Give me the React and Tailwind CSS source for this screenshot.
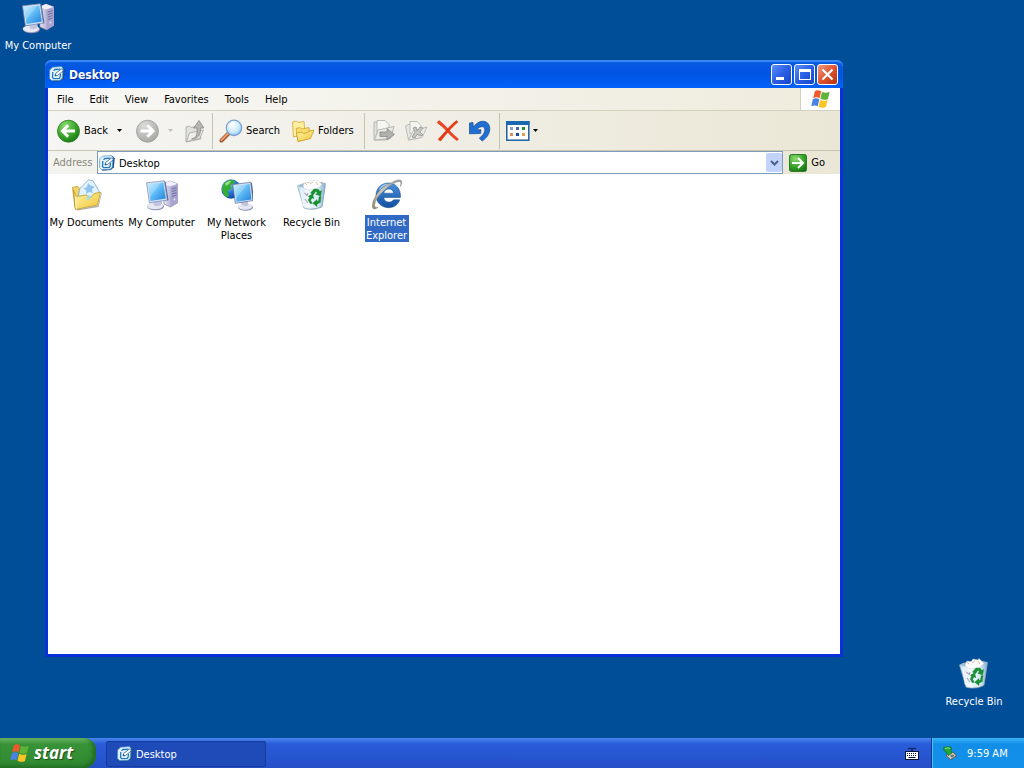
import React, { useState } from "react";

const menus = ["File", "Edit", "View", "Favorites", "Tools", "Help"];

// Gradients shared by all the icons
function IconDefs() {
  return (
    <svg className="absolute h-0 w-0" aria-hidden="true">
      <defs>
        <linearGradient id="screen" x1="0" y1="0" x2="1" y2="1">
          <stop offset="0" stopColor="#b9ecff" />
          <stop offset=".5" stopColor="#5cb8f5" />
          <stop offset="1" stopColor="#1f7fd8" />
        </linearGradient>
        <linearGradient id="tower" x1="0" y1="0" x2="1" y2="0">
          <stop offset="0" stopColor="#e9e8f6" />
          <stop offset="1" stopColor="#8c88ba" />
        </linearGradient>
        <linearGradient id="folder" x1="0" y1="0" x2="1" y2="1">
          <stop offset="0" stopColor="#fff6a4" />
          <stop offset="1" stopColor="#f0c53c" />
        </linearGradient>
        <linearGradient id="bin" x1="0" y1="0" x2="1" y2="0">
          <stop offset="0" stopColor="#c3ddea" />
          <stop offset=".35" stopColor="#f4fbff" />
          <stop offset=".75" stopColor="#d3e9f5" />
          <stop offset="1" stopColor="#86abcc" />
        </linearGradient>
        <radialGradient id="globe" cx=".35" cy=".3" r=".8">
          <stop offset="0" stopColor="#8fd4ff" />
          <stop offset=".5" stopColor="#2678d8" />
          <stop offset="1" stopColor="#123d90" />
        </radialGradient>
        <radialGradient id="green" cx=".35" cy=".25" r=".85">
          <stop offset="0" stopColor="#8fdc74" />
          <stop offset=".55" stopColor="#3aa52a" />
          <stop offset="1" stopColor="#167414" />
        </radialGradient>
        <radialGradient id="grey" cx=".35" cy=".25" r=".85">
          <stop offset="0" stopColor="#dcdcd8" />
          <stop offset="1" stopColor="#a3a3a0" />
        </radialGradient>
        <radialGradient id="lens" cx=".4" cy=".35" r=".7">
          <stop offset="0" stopColor="#ffffff" />
          <stop offset=".6" stopColor="#cdebfb" />
          <stop offset="1" stopColor="#85c2ef" />
        </radialGradient>
        <linearGradient id="ie" x1="0" y1="0" x2="0" y2="1">
          <stop offset="0" stopColor="#4a93de" />
          <stop offset="1" stopColor="#134f9f" />
        </linearGradient>
        <linearGradient id="swoosh" x1="1" y1="0" x2="0" y2="1">
          <stop offset="0" stopColor="#8d9096" />
          <stop offset=".5" stopColor="#cfcfca" />
          <stop offset="1" stopColor="#8f8466" />
        </linearGradient>
      </defs>
    </svg>
  );
}

function Monitor() {
  return (
    <g>
      <path d="M8 21l7-1 1 5-6 2z" fill="#a9a9cc" />
      <ellipse cx="9.500" cy="27.500" rx="8.500" ry="3.800" fill="#8f8fb5" />
      <ellipse cx="9" cy="26.700" rx="8.200" ry="3.500" fill="#e6e7f3" />
      <path d="M7 21.500l7-1 1.500 5c-2 1.600-5 2-7.500 1z" fill="#c3c5de" />
      <path d="M18 2l1.500.8 3 18.500-1.800.3z" fill="#4c5f96" />
      <path d="M.5 3.800L18.300 1.800 21.300 21 3.400 23.800z" fill="#d5e3f2" stroke="#7089b5" strokeWidth=".7" />
      <path d="M2 5.200l15.200-1.800 2.600 16.200L4.500 22z" fill="url(#screen)" />
      <path d="M2 5.200l13-1.500L4 18z" fill="#fff" opacity=".22" />
    </g>
  );
}

function ComputerIcon() {
  return (
    <svg width="32" height="32" viewBox="0 0 32 32" aria-hidden="true">
      <path d="M17 5l7-3 8 3v18.500L24.500 28 18 25z" fill="url(#tower)" stroke="#77749f" strokeWidth=".6" />
      <path d="M17 5l7-3 8 3-7.500 2.500z" fill="#f0f0fb" />
      <path d="M24.500 7.500L32 5v18.500L24.500 28z" fill="#a8a4cf" />
      <path d="M26 10l4.500-1.400M26 12.500l4.500-1.400M26 15l4.500-1.400M26 17.500l4.500-1.400" stroke="#6f6b9c" strokeWidth=".9" />
      <circle cx="28.500" cy="20.500" r=".9" fill="#e4e4ff" />
      <Monitor />
    </svg>
  );
}

function NetworkIcon() {
  return (
    <svg width="32" height="32" viewBox="0 0 32 32" aria-hidden="true">
      <circle cx="10" cy="10" r="9.700" fill="url(#globe)" />
      <path d="M3 4.500C6 1 11 .3 14 2l-1.500 3-3 1 1 3.500-4 2.500 1.500 4-2 2.500C1.500 15.500-.5 10 3 4.500z" fill="#37ad32" />
      <path d="M4 4.500C6 2.500 8 2 10 2L8 5 5 7z" fill="#9be184" />
      <g transform="translate(11.500 3)">
        <path d="M8 20l7-1 1 5-5 2z" fill="#a9a9cc" />
        <ellipse cx="13" cy="25.400" rx="7.500" ry="3.400" fill="#8f8fb5" />
        <ellipse cx="12.500" cy="24.600" rx="7.200" ry="3.100" fill="#e6e7f3" />
        <path d="M9 19l6-1 1 5c-2 1.500-4 1.500-6 .5z" fill="#c3c5de" />
        <path d="M18 .5l1.500.7 2 17.500-1.500.3z" fill="#4c5f96" />
        <path d="M.2 2.500L18.300.3 20.400 18.600 2.800 21.300z" fill="#d5e3f2" stroke="#53699c" strokeWidth=".7" />
        <path d="M1.700 3.900l15.400-1.900 1.800 15.400L4 19.700z" fill="url(#screen)" />
        <path d="M1.700 3.900l13-1.500L3.500 16z" fill="#fff" opacity=".22" />
      </g>
    </svg>
  );
}

function DocumentsIcon() {
  return (
    <svg width="32" height="32" viewBox="0 0 32 32" aria-hidden="true">
      <path d="M5 30.500l22-4L30.500 13l.3 1.500L27.500 28 6 31.500z" fill="#77756c" opacity=".6" />
      <path d="M1.500 8.500l5-1.200 2 2 16-2 1.500 1.500L27 24 4 29.500z" fill="#f3d263" stroke="#b58f20" strokeWidth=".7" />
      <path d="M8.500 10L17.500.8l4.500 1 6.500 11L17 24 7.500 17z" fill="#e2f2fc" stroke="#7a9eb8" strokeWidth=".7" />
      <path d="M17 4l2.500 2.500 4 1-2.500 3 .5 3.500-3.500-1-3 2 .5-3.500-3-2 3.500-1.500z" fill="#8ec5ee" />
      <path d="M2.500 11.500l2.500 6 10.500-1.500 3.500 3 4-4.500 6.500-1.300L26.500 26 4.500 30.500z" fill="url(#folder)" stroke="#b58f20" strokeWidth=".7" />
      <path d="M18 15.500l2.500 2.500-2.500 3.500-3.500-1.500z" fill="#a5d8ef" opacity=".75" />
      <path d="M5 17.500v12" stroke="#fffbe0" strokeWidth=".9" />
    </svg>
  );
}

function BinIcon() {
  return (
    <svg width="32" height="32" viewBox="0 0 32 32" aria-hidden="true">
      <path d="M26 8l3.500-.5-3 20.500c-4 2.500-12 3.500-17 1.500z" fill="#4d596b" opacity=".5" />
      <path d="M1.500 7c7-4 20-5 28-2.500l-3.500 22.500c-4 3-13 4-18 2z" fill="url(#bin)" stroke="#89a9be" strokeWidth=".7" />
      <path d="M1.500 7c8 3 21 2.500 28-2.500-7-3-21-1.500-28 2.500z" fill="#9dbdd3" />
      <path d="M7 7l2-4 4 1 2-3 5 1 1-1.500 3 3 2 2-4 3.500-8 2-5-1z" fill="#fff" stroke="#c8cdd2" strokeWidth=".5" />
      <path d="M9 4l2 2M14 5l3-2M20 3l2 3" stroke="#d6a985" strokeWidth=".8" />
      <path d="M5 10l2.500 17" stroke="#fff" strokeWidth="1.200" opacity=".8" />
      <path d="M8.500 14l3 3M9 20l3 4M12 14l-1 3" stroke="#aaa3bd" strokeWidth="1.100" />
      <g fill="#169431" stroke="#08701b" strokeWidth=".35">
        <path d="M14.500 14l3.500-4 4.300.3 1.600 2.200 1.700-.9-1 5.500-5-1.900 1.900-1.200-1.500-1.800-2.600 3.500z" />
        <path d="M25 17.500l-.6 5.800-3.400 2v2.200l-4.300-3.300 4.300-3.700v2.100l1.800-1.200.2-3.500z" />
        <path d="M12.300 17.300l4.300-2.500 1.200 4.900-1.800-.8-1.400 2.400 1.700 3-1.900.5-2.200-3.900 1.500-2.700z" />
      </g>
    </svg>
  );
}

function ExplorerIcon() {
  return (
    <svg width="32" height="32" viewBox="0 0 32 32" aria-hidden="true">
      <path
        d="M29.500 18.500H12.800c.3 3 2.300 4.600 5 4.600 2.100 0 3.700-.7 4.700-2.300h6.300c-1.800 5-5.800 7.900-11 7.900C10.400 28.700 5 23.400 5 16.300 5 9.300 10.400 4 17.400 4c7.400 0 12.500 5.500 12.100 14.500zM12.800 14.200h9.800c-.3-2.700-2.100-4.300-4.900-4.300-2.600 0-4.400 1.600-4.900 4.300z"
        fill="url(#ie)"
        fillRule="evenodd"
        stroke="#10498e"
        strokeWidth=".5"
      />
      <path d="M8.500 10.500C11 6.500 15 5 19 5.500" fill="none" stroke="#a7d4fa" strokeWidth="1.200" />
      <path
        d="M20 4c4.500-3.200 8.800-3.800 10.200-2.400 1.200 1.200.6 3.500-.9 6 1-3.200.7-4.900-.8-5C22.500 2.400 5.500 15.500 3.700 25.500c-.4 2.400.7 3.500 3.300 2.900C3.500 30.600 1.200 30.700 1.300 26.500 1.800 18 10.500 7 20 4z"
        fill="url(#swoosh)"
        stroke="#777568"
        strokeWidth=".4"
      />
    </svg>
  );
}

function DesktopIcon() {
  return (
    <svg width="16" height="16" viewBox="0 0 16 16" aria-hidden="true">
      <path d="M3 2L13.500.8l2.300 2.500-.9 9-3 2.700-8.400.7L2 13z" fill="#1f4c84" />
      <path d="M.7 4L3.500 1.200 12.500.6l1.500 2-.7 9.600-2.200 2-8.300.3L.5 12.500z" fill="#e3f6ff" stroke="#4f8fc2" strokeWidth=".7" />
      <path d="M4.500 4.800L6 3.500l5.500-.3M3.800 6l-.3 5.500 1.200 1.200 5.500-.3 1-1.400.3-3" fill="none" stroke="#2477bd" strokeWidth="1.300" />
      <path d="M6 10l.7-2.700L12.500 3l2 1.700-6 4.800z" fill="#fff" stroke="#1c5b9c" strokeWidth=".8" />
      <path d="M6 10l.5-1.800 1.200 1.200z" fill="#123a70" />
    </svg>
  );
}

function WindowsFlag({ size }) {
  return (
    <svg width={size} height={size} viewBox="1.500 1 16.500 18" aria-hidden="true">
      <path d="M4.200 3C6 1.800 8 1.900 9.900 3L8.500 9.400C6.700 8.200 4.700 8.200 2.700 9.300z" fill="#ee5a2c" />
      <path d="M10.600 3.400c2 1.100 4.500 1.200 6.900.1L16 9.900c-2.300 1.100-4.800 1-6.800-.1z" fill="#5fb336" />
      <path d="M2.400 10.200c2-1.100 4-1 5.900.1l-1.500 6.300c-1.900-1.100-3.800-1.100-5.800 0z" fill="#4a82e4" />
      <path d="M9 10.700c2 1.200 4.400 1.200 6.700.1l-1.500 6.300c-2.300 1.100-4.700 1-6.700-.1z" fill="#fcc526" />
    </svg>
  );
}

function RoundArrow({ grey, flip }) {
  return (
    <svg width="24" height="24" viewBox="0 0 24 24" aria-hidden="true">
      <circle cx="12.500" cy="12.200" r="11" fill={grey ? "url(#grey)" : "url(#green)"} stroke={grey ? "#9b9b98" : "#2a7a1e"} strokeWidth=".8" />
      <path
        d={flip ? "M5.500 12h12M12.300 6.300L18 12l-5.700 5.700" : "M19 12H7M12.200 6.300L6.500 12l5.700 5.700"}
        fill="none"
        stroke="#fff"
        strokeWidth="3"
      />
    </svg>
  );
}

function UpIcon() {
  return (
    <svg width="24" height="24" viewBox="0 0 24 24" aria-hidden="true">
      <path d="M4 8l3.500-1L9 8.500 17 7l2 13-15 3z" fill="#e0e0dc" stroke="#a6a6a2" strokeWidth=".8" />
      <path d="M4.500 22.500l3-8.500 14-3-4 8.500z" fill="#eeeeea" stroke="#a6a6a2" strokeWidth=".8" />
      <path d="M9.500 20c4.500-1 6-4 5.500-11h-3.500L17 1.500 22 9h-3.500c.5 7-2.500 11-9 11z" fill="#b5b5b2" stroke="#8c8c89" strokeWidth=".8" />
    </svg>
  );
}

function SearchIcon() {
  return (
    <svg width="24" height="24" viewBox="0 0 24 24" aria-hidden="true">
      <path d="M10.500 13.500l-8 8" stroke="#9b5733" strokeWidth="4" strokeLinecap="round" />
      <path d="M10 13.500l-7.500 7.500" stroke="#ef9a6b" strokeWidth="2.200" strokeLinecap="round" />
      <circle cx="15" cy="8.800" r="7.700" fill="url(#lens)" stroke="#7fa3cf" strokeWidth="1.300" />
      <path d="M10.500 7c1-2.500 3-3.500 5-3.500" fill="none" stroke="#fff" strokeWidth="1.600" />
    </svg>
  );
}

function FoldersIcon() {
  return (
    <svg width="24" height="24" viewBox="0 0 24 24" aria-hidden="true">
      <path d="M1.500 3l4-1L7 3.500l6-1 1 12.500-11.500 3z" fill="#fff0a0" stroke="#d0a532" strokeWidth=".8" />
      <path d="M5 9.500l4-1 1.500 1.500L18 8.500l1 10.500L7 22.500z" fill="#f7db6c" stroke="#d0a532" strokeWidth=".8" />
      <path d="M7 22.500L5.500 14l5.500-1 1.500 1.500 4-1 1.500-1.500 5-1-3.500 8.500z" fill="url(#folder)" stroke="#c99b22" strokeWidth=".8" />
    </svg>
  );
}

function TransferIcon({ copy }) {
  return (
    <svg width="24" height="24" viewBox="0 0 24 24" aria-hidden="true">
      {copy ? (
        <>
          <path d="M1.500 7l4-2 2 2 7-2v14l-10 2z" fill="#e6e6e2" stroke="#b0b0ac" strokeWidth=".8" />
          <path d="M6 2.500h7l4 4v8H6z" fill="#f5f5f2" stroke="#b0b0ac" strokeWidth=".8" />
          <path d="M4.500 21l4.500-9 14-4-5 10.500z" fill="#ebebe7" stroke="#b0b0ac" strokeWidth=".8" />
          <path d="M9 9l3-1 1 4 3-4 3 1-3 4 3 3-3 1-3-2-2 4-3-1 3-5z" fill="#c7c7c4" stroke="#92928f" strokeWidth=".8" />
        </>
      ) : (
        <>
          <path d="M2 3h5l2 2h5v16H2z" fill="#e2e2de" stroke="#aaaaa6" strokeWidth=".8" />
          <path d="M5 1.500h8l4 4V15H5z" fill="#f5f5f2" stroke="#b0b0ac" strokeWidth=".8" />
          <path d="M2.500 21L6 11l16-3.500-3.500 12z" fill="#e9e9e5" stroke="#aaaaa6" strokeWidth=".8" />
          <path d="M8 13h7V9.500l7.500 6L15 21v-3.500H8z" fill="#b0b0ad" stroke="#898986" strokeWidth=".8" />
        </>
      )}
    </svg>
  );
}

function DeleteIcon() {
  return (
    <svg width="24" height="24" viewBox="0 0 24 24" aria-hidden="true">
      <path d="M1 3.500L3 1.500c4 3 7 6 9.500 9 3 3.500 6.500 6.500 10 9.500L21 21.800c-5-4-8-7-11-10.300C7.500 8.500 4 6 1 3.500z" fill="#ef4422" stroke="#c4260d" strokeWidth=".4" />
      <path d="M20.500 1.500L22 3c-4 3.500-7 6.500-9.500 9.500-3 3.300-5 6-7.700 9.500L2 20.500c3.500-4 6-6.500 9-10 3-3.300 6-6.300 9.500-9z" fill="#e93a18" stroke="#c4260d" strokeWidth=".4" />
    </svg>
  );
}

function UndoIcon() {
  return (
    <svg width="24" height="24" viewBox="0 0 24 24" aria-hidden="true">
      <path
        d="M1.500 4l3.500-.5.300 4.500C8.500 4 12 2 15.500 2.300c4 .4 6.500 3.700 6.300 8-.3 5-3.300 8.700-7.500 11.700l-3-2.800c3.200-2.400 5.200-4.900 5.500-7.900.2-2-.8-3.500-2.500-3.600-1.800-.2-3.800 1-5.600 3l4.300.1-.5 3.700-11 .3z"
        fill="#1f6fd2"
        stroke="#12489a"
        strokeWidth=".7"
      />
    </svg>
  );
}

function ViewsIcon() {
  return (
    <svg width="24" height="20" viewBox="0 0 24 20" aria-hidden="true">
      <rect x=".8" y=".8" width="22" height="18.400" fill="#fff" stroke="#1d5f9e" strokeWidth="1.500" />
      <rect x="0" y="0" width="23.500" height="4" fill="#1967ae" />
      <rect x="4" y="6" width="3" height="3" fill="#8b9dba" />
      <rect x="10" y="6" width="3" height="3" fill="#3d69b3" />
      <rect x="16" y="6" width="3" height="3" fill="#1d9132" />
      <rect x="4" y="12" width="3" height="3" fill="#e08c62" />
      <rect x="10" y="12" width="3" height="3" fill="#134a93" />
      <rect x="16" y="12" width="3" height="3" fill="#dca052" />
    </svg>
  );
}

function Caret({ color }) {
  return (
    <svg width="5" height="3" viewBox="0 0 5 3" aria-hidden="true">
      <path d="M0 0h5L2.500 3z" fill={color} />
    </svg>
  );
}

function Separator() {
  return <div className="h-9 w-px shrink-0 bg-[#c5c2b2]" />;
}

const files = [
  { name: "My Documents", icon: <DocumentsIcon /> },
  { name: "My Computer", icon: <ComputerIcon /> },
  { name: "My Network Places", icon: <NetworkIcon /> },
  { name: "Recycle Bin", icon: <BinIcon /> },
  { name: "Internet Explorer", icon: <ExplorerIcon /> },
];

export default function App() {
  const [selected, setSelected] = useState("Internet Explorer");

  return (
    <div className="flex min-h-screen flex-col bg-[#004e98] font-['DejaVu_Sans_Condensed','DejaVu_Sans',sans-serif] text-[11px] leading-[13px] text-black">
      <IconDefs />

      <main className="relative flex-1">
        {/* Desktop shortcuts */}
        <button className="absolute top-[2px] left-0 flex w-[76px] flex-col items-center gap-[5px] text-white">
          <ComputerIcon />
          <span className="whitespace-nowrap">My Computer</span>
        </button>
        <button className="absolute right-3 bottom-[30px] flex w-[76px] flex-col items-center gap-[5px] text-white">
          <BinIcon />
          <span className="whitespace-nowrap">Recycle Bin</span>
        </button>

        {/* Explorer window */}
        <section className="absolute top-[60px] right-[181px] bottom-[81px] left-[45px] flex flex-col rounded-t-md border-x-[3px] border-b-[3px] border-[#0831d9] bg-[#0055e5]">
          <header className="-mx-[3px] flex h-7 shrink-0 items-center rounded-t-md bg-linear-to-b from-[#0a5be0] via-[#0054e3] to-[#0262fb] pr-[5px] pl-1 shadow-[inset_0_2px_1px_#3a8bf8]">
            <DesktopIcon />
            <h1 className="ml-1 flex-1 pt-[2px] text-[12px] leading-4 font-bold text-white [text-shadow:1px_1px_#0b2e8c]">Desktop</h1>
            <div className="flex gap-[2px]">
              <button aria-label="Minimize" className="flex h-[21px] w-[21px] items-end rounded-[3px] border border-white bg-linear-to-br from-[#5d8ff5] via-[#2a5fe6] to-[#1744c8] p-1">
                <span className="h-[3px] w-2 bg-white" />
              </button>
              <button aria-label="Maximize" className="flex h-[21px] w-[21px] items-center justify-center rounded-[3px] border border-white bg-linear-to-br from-[#5d8ff5] via-[#2a5fe6] to-[#1744c8]">
                <span className="h-[11px] w-3 border border-t-[3px] border-white" />
              </button>
              <button aria-label="Close" className="flex h-[21px] w-[21px] items-center justify-center rounded-[3px] border border-white bg-linear-to-br from-[#ee9a7c] via-[#df5230] to-[#b8310c]">
                <svg width="13" height="13" viewBox="0 0 13 13" aria-hidden="true">
                  <path d="M1.500 1.500l10 10M11.500 1.500l-10 10" stroke="#fff" strokeWidth="2.200" />
                </svg>
              </button>
            </div>
          </header>

          <nav className="flex h-[23px] shrink-0 items-stretch border-b border-[#d4d0c0] bg-linear-to-r from-[#f7f7f5] to-[#efecdd] pl-px">
            {menus.map((menu) => (
              <button key={menu} className="px-2">
                {menu}
              </button>
            ))}
            <div className="ml-auto flex w-10 items-center justify-center border-l border-[#d4d0c0] bg-white">
              <WindowsFlag size={20} />
            </div>
          </nav>

          {/* Toolbar */}
          <div className="flex h-10 shrink-0 items-center border-b border-[#c9c5b4] bg-linear-to-r from-[#f5f5f3] to-[#ebe7d6] pl-2">
            <button className="flex items-center gap-1">
              <RoundArrow />
              Back
            </button>
            <button aria-label="Back history" className="ml-[5px] flex h-6 w-3 items-center justify-center">
              <Caret color="#000" />
            </button>
            <button aria-label="Forward" className="ml-[10px]">
              <RoundArrow grey flip />
            </button>
            <button aria-label="Forward history" className="ml-[5px] flex h-6 w-3 items-center justify-center">
              <Caret color="#c0c0bb" />
            </button>
            <button aria-label="Up" className="mr-[6px] ml-[6px]">
              <UpIcon />
            </button>
            <Separator />
            <button className="ml-[6px] flex items-center gap-[3px]">
              <SearchIcon />
              Search
            </button>
            <button className="mr-[10px] ml-[11px] flex items-center gap-[3px]">
              <FoldersIcon />
              Folders
            </button>
            <Separator />
            <div className="mx-[7px] flex gap-2">
              <button aria-label="Move to">
                <TransferIcon />
              </button>
              <button aria-label="Copy to">
                <TransferIcon copy />
              </button>
              <button aria-label="Delete">
                <DeleteIcon />
              </button>
              <button aria-label="Undo">
                <UndoIcon />
              </button>
            </div>
            <Separator />
            <button aria-label="Views" className="ml-[6px] flex items-center gap-[3px]">
              <ViewsIcon />
              <Caret color="#000" />
            </button>
          </div>

          {/* Address bar */}
          <form className="flex h-[23px] shrink-0 items-center bg-linear-to-r from-[#f3f3ef] to-[#ebe7d6] pl-[5px]" onSubmit={(e) => e.preventDefault()}>
            <label htmlFor="address" className="mr-1 w-10 whitespace-nowrap text-[#8a887c]">
              Address
            </label>
            <div className="flex h-full flex-1 items-center border border-[#7f9db9] bg-white pl-px">
              <DesktopIcon />
              <input id="address" type="text" defaultValue="Desktop" className="ml-1 min-w-0 flex-1 bg-transparent pt-px outline-none" />
              <button type="button" aria-label="Show addresses" className="flex h-[19px] w-4 items-center justify-center rounded-[2px] bg-[#c2d3fc]">
                <svg width="9" height="6" viewBox="0 0 9 6" aria-hidden="true">
                  <path d="M1 1l3.500 3.500L8 1" fill="none" stroke="#4d6185" strokeWidth="2" />
                </svg>
              </button>
            </div>
            <button type="submit" className="mr-[15px] ml-[6px] flex items-center gap-1">
              <svg width="18" height="18" viewBox="0 0 18 18" aria-hidden="true">
                <rect x=".5" y=".5" width="17" height="17" rx="2" fill="url(#green)" stroke="#2c7b2b" />
                <path d="M3 9h11M9 4l5 5-5 5" fill="none" stroke="#fff" strokeWidth="2" />
              </svg>
              Go
            </button>
          </form>

          <div className="flex flex-1 flex-wrap content-start items-start overflow-auto bg-white pt-[5px] pl-px">
            {files.map((file) => (
              <button key={file.name} onClick={() => setSelected(file.name)} className="flex w-[75px] flex-col items-center gap-1">
                {file.icon}
                <span className={file.name === selected ? "w-11 bg-[#316ac5] pt-px text-white" : "w-full pt-px"}>{file.name}</span>
              </button>
            ))}
          </div>
        </section>
      </main>

      {/* Taskbar */}
      <footer className="flex h-[30px] shrink-0 bg-linear-to-b from-[#4a86ee] via-[#2a5bd9] via-20% to-[#2450c8] text-white">
        <button className="flex w-24 items-center gap-1 rounded-r-xl bg-linear-to-b from-[#6cb768] via-[#389238] via-20% to-[#2f892f] pl-[10px] shadow-[inset_-3px_-2px_4px_#1f6a20]">
          <WindowsFlag size={20} />
          <span className="font-['Open_Sans',sans-serif] text-[17px] leading-6 font-bold italic [text-shadow:1px_1px_1px_#1c4f1c]">start</span>
        </button>
        <button className="mt-[3px] mb-px ml-[10px] flex w-40 items-center gap-[3px] rounded-[2px] border border-[#173a9c] bg-[#1e4bb8] pl-[10px]">
          <DesktopIcon />
          Desktop
        </button>
        <button aria-label="Keyboard layout" className="mr-3 ml-auto">
          <svg width="14" height="14" viewBox="0 0 14 14" aria-hidden="true">
            <path d="M3 3l2-1 2 1 2-1 2 1M7 5V3" fill="none" stroke="#06143c" />
            <rect x=".5" y="5.500" width="13" height="8" fill="#fff" stroke="#06143c" />
            <path d="M2 7.500h10M2 9.500h10" stroke="#06143c" strokeDasharray="1 1" />
            <path d="M3.500 11.500h7" stroke="#06143c" />
          </svg>
        </button>
        <div className="flex w-[93px] items-center gap-[9px] border-l border-[#0b3894] bg-linear-to-b from-[#39b5f5] via-[#128ee8] via-20% to-[#1290ea] pl-[10px] shadow-[inset_1px_0_#4cc3fa]">
          <svg width="16" height="16" viewBox="0 0 16 16" aria-hidden="true">
            <path d="M5 9l6-2 3.500 4-6 3.500-4-3.500z" fill="#cfd0c8" stroke="#53584f" />
            <path d="M8 10.500l3-1 1.500 1.500-3 1.500z" fill="#6d726b" />
            <path d="M1.500 2.500L6 1.500l3.500 1-.5 3 1 2.500-3.500 2.500L4 7 2 5.500z" fill="#27a836" stroke="#0f6d24" strokeWidth=".7" />
            <path d="M3 3.500l3-.7 2 .7" fill="none" stroke="#8fe08f" />
          </svg>
          <span className="whitespace-nowrap">9:59 AM</span>
        </div>
      </footer>
    </div>
  );
}
